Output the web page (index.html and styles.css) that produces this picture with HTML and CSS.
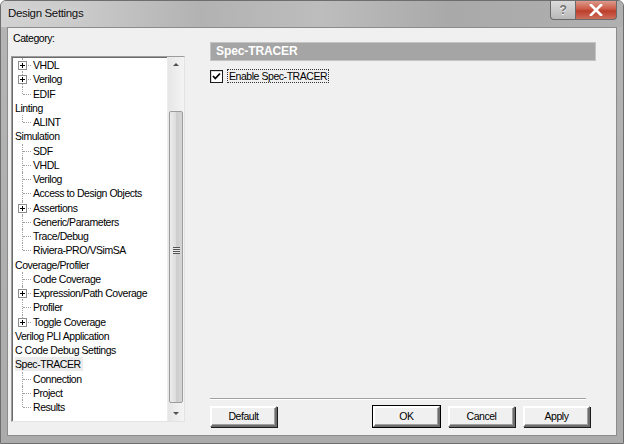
FILE: index.html
```html
<!DOCTYPE HTML>
<html>
<head>
<link rel="stylesheet" href="styles.css">
</head>
<body>

<div class="window">
  <div class="titlebar">
    <span class="title">Design Settings</span>
    <div class="caption-buttons">
      <div class="cap-btn help">?</div>
      <div class="cap-btn close">
        <svg width="14" height="12" viewBox="0 0 14 12">
          <path d="M2 1 L12 11 M12 1 L2 11" stroke="#ffffff" stroke-width="2.6" stroke-linecap="square"/>
        </svg>
      </div>
    </div>
  </div>

  <div class="client">
    <div class="left-panel">
      <div class="category-label">Category:</div>
      <div class="tree-box">
        <div class="tree">
          <div class="row child"><span class="plus"></span>VHDL</div>
          <div class="row child"><span class="plus"></span>Verilog</div>
          <div class="row child last">EDIF</div>
          <div class="row">Linting</div>
          <div class="row child last">ALINT</div>
          <div class="row">Simulation</div>
          <div class="row child">SDF</div>
          <div class="row child">VHDL</div>
          <div class="row child">Verilog</div>
          <div class="row child">Access to Design Objects</div>
          <div class="row child"><span class="plus"></span>Assertions</div>
          <div class="row child">Generic/Parameters</div>
          <div class="row child">Trace/Debug</div>
          <div class="row child last">Riviera-PRO/VSimSA</div>
          <div class="row">Coverage/Profiler</div>
          <div class="row child">Code Coverage</div>
          <div class="row child"><span class="plus"></span>Expression/Path Coverage</div>
          <div class="row child">Profiler</div>
          <div class="row child last"><span class="plus"></span>Toggle Coverage</div>
          <div class="row">Verilog PLI Application</div>
          <div class="row">C Code Debug Settings</div>
          <div class="row"><span class="selected">Spec-TRACER</span></div>
          <div class="row child">Connection</div>
          <div class="row child">Project</div>
          <div class="row child last">Results</div>
        </div>
        <div class="scrollbar">
          <div class="arrow up"></div>
          <div class="track">
            <div class="thumb"><span class="grip"></span></div>
          </div>
          <div class="arrow down"></div>
        </div>
      </div>
    </div>

    <div class="right-panel">
      <div class="page">
        <div class="page-header">Spec-TRACER</div>
        <label class="check-row">
          <span class="checkbox">
            <svg width="9" height="9" viewBox="0 0 9 9">
              <path d="M1 4 L3.3 6.5 L8 1.5" stroke="#000" stroke-width="1.8" fill="none"/>
            </svg>
          </span>
          <span class="check-label">Enable Spec-TRACER</span>
        </label>
      </div>
      <div class="separator"></div>
      <div class="button-row">
        <div class="btn">Default</div>
        <div class="spacer"></div>
        <div class="btn default">OK</div>
        <div class="btn">Cancel</div>
        <div class="btn">Apply</div>
      </div>
    </div>
  </div>
</div>

</body>
</html>
```

FILE: styles.css
```css
body {
  margin: 0;
  background: #ffffff;
  font-family: "Liberation Sans", Arial, sans-serif;
  font-size: 10.5px;
  letter-spacing: -0.45px;
  color: #000;
}

.window {
  width: 624px;
  height: 444px;
  box-sizing: border-box;
  display: flex;
  flex-direction: column;
  border: 1px solid #6e6e6e;
  border-radius: 6px 6px 0 0;
  background: linear-gradient(to bottom, #c4c4c4 0px, #b4b4b4 30px, #ababab 100%);
  overflow: hidden;
}

.titlebar {
  height: 26px;
  display: flex;
  align-items: flex-start;
  justify-content: space-between;
  background: linear-gradient(to right, #d2d2d2 0px, #c8c8c8 90px, #b2b2b2 200px, #bdbdbd 320px, #a9a9a9 450px, #b0b0b0 100%);
}

.title {
  margin: 6px 0 0 7px;
  font-size: 11.5px;
  letter-spacing: -0.35px;
  color: #111;
  text-shadow: 0 0 6px #e8e8e8;
}

.caption-buttons {
  display: flex;
  margin-right: 6px;
}

.cap-btn {
  height: 18px;
  display: flex;
  align-items: center;
  justify-content: center;
  border: 1px solid #6a6a6a;
  border-top: none;
}

.cap-btn.help {
  width: 24px;
  border-radius: 0 0 0 4px;
  border-right: none;
  background: linear-gradient(to bottom, #dcdcdc, #b8b8b8);
  color: #707070;
  font-weight: bold;
  font-size: 12px;
  text-shadow: 0 1px 0 #fff;
}

.cap-btn.close {
  width: 40px;
  border-radius: 0 0 4px 0;
  background: linear-gradient(to bottom, #dc9a8c 0%, #cc5a46 45%, #bb3e2a 55%, #cf6e5c 100%);
}

.client {
  flex: 1;
  margin: 0 6px 7px 6px;
  border: 1px solid #8c8c8c;
  background: #f0f0f0;
  display: flex;
}

.left-panel {
  width: 174px;
  margin-left: 3px;
  display: flex;
  flex-direction: column;
}

.category-label {
  margin: 4px 0 0 2px;
  height: 24px;
}

.tree-box {
  height: 366px;
  box-sizing: border-box;
  border: 1px solid #9d9d9d;
  border-right-color: #e3e3e3;
  border-bottom-color: #e3e3e3;
  box-shadow: inset 1px 1px 0 #6b6b6b;
  background: #ffffff;
  display: flex;
}

.tree {
  flex: 1;
  padding: 1px 0 0 2px;
  overflow: hidden;
}

.row {
  position: relative;
  height: 14.25px;
  line-height: 14px;
  padding-left: 1px;
  white-space: nowrap;
}

.row.child {
  padding-left: 19px;
}

.row.child::before {
  content: "";
  position: absolute;
  left: 8px;
  top: 0;
  bottom: 0;
  border-left: 1px dotted #a0a0a0;
}

.row.child.last::before {
  bottom: 50%;
}

.row.child::after {
  content: "";
  position: absolute;
  left: 9px;
  width: 8px;
  top: 7px;
  border-top: 1px dotted #a0a0a0;
}

.plus {
  position: absolute;
  left: 4px;
  top: 3px;
  width: 7px;
  height: 7px;
  border: 1px solid #8e8e8e;
  background: #fff;
  z-index: 1;
}

.plus::before {
  content: "";
  position: absolute;
  left: 1px;
  top: 3px;
  width: 5px;
  height: 1px;
  background: #000;
}

.plus::after {
  content: "";
  position: absolute;
  left: 3px;
  top: 1px;
  width: 1px;
  height: 5px;
  background: #000;
}

.selected {
  display: inline-block;
  background: #ececec;
  padding-right: 2px;
}

.scrollbar {
  width: 16px;
  display: flex;
  flex-direction: column;
  background: linear-gradient(to right, #e6e6e6, #f4f4f4);
  border-left: 1px solid #ececec;
}

.arrow {
  height: 16px;
  position: relative;
}

.arrow::before {
  content: "";
  position: absolute;
  left: 5px;
  width: 0;
  height: 0;
  border-left: 3px solid transparent;
  border-right: 3px solid transparent;
}

.arrow.up::before {
  top: 6px;
  border-bottom: 3px solid #505050;
}

.arrow.down::before {
  top: 7px;
  border-top: 3px solid #505050;
}

.track {
  flex: 1;
  padding: 38px 0 2px 0;
  display: flex;
}

.thumb {
  flex: 1;
  margin: 0 1px;
  border: 1px solid #9c9c9c;
  border-radius: 2px;
  background: linear-gradient(to right, #ececec 0%, #dcdcdc 50%, #cdcdcd 51%, #d6d6d6 100%);
  display: flex;
  align-items: center;
  justify-content: center;
}

.grip {
  width: 7px;
  height: 7px;
  background: repeating-linear-gradient(to bottom, #555 0px, #555 1px, #e8e8e8 1px, #e8e8e8 2px);
  margin-top: -14px;
}

.right-panel {
  flex: 1;
  margin: 14px 20px 8px 25px;
  display: flex;
  flex-direction: column;
}

.page {
  flex: 1;
}

.page-header {
  height: 17px;
  line-height: 17px;
  padding-left: 5px;
  background: #a5a5a5;
  border: 1px solid #c4c4c4;
  color: #ffffff;
  font-weight: bold;
  font-size: 12px;
  letter-spacing: -0.1px;
}

.check-row {
  display: flex;
  align-items: center;
  margin: 8px 0 0 0;
}

.checkbox {
  width: 11px;
  height: 11px;
  border: 1px solid #1c1c1c;
  background: #fff;
  display: flex;
  align-items: center;
  justify-content: center;
  box-shadow: inset 1px 1px 0 #d8d8d8;
}

.check-label {
  margin-left: 4px;
  padding: 0 1px;
  border: 1px dotted #333;
  line-height: 12px;
}

.separator {
  margin: 0 10px 6px 0;
  border-top: 1px solid #a0a0a0;
  border-bottom: 1px solid #ffffff;
}

.button-row {
  display: flex;
  gap: 8px;
  margin-right: 6px;
}

.spacer {
  flex: 1;
}

.btn {
  width: 63px;
  height: 17px;
  line-height: 17px;
  text-align: center;
  background: #f0f0f0;
  border: 2px solid;
  border-color: #ffffff #6d6d6d #6d6d6d #ffffff;
  box-shadow: inset -1px -1px 0 #a0a0a0, 1px 1px 0 #1c1c1c;
}

.btn.default {
  outline: 1px solid #000;
  box-shadow: inset -1px -1px 0 #a0a0a0;
}
```
